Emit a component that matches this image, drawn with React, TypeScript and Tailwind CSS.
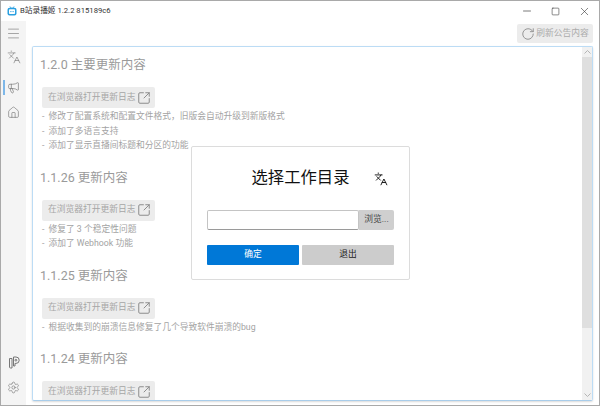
import React from 'react';
import { House, Languages, Megaphone, Menu, Minus, RotateCw, Settings, Square, SquareArrowOutUpRight, X } from 'lucide-react';

const sections = [
  {
    title: '1.2.0 主要更新内容',
    items: ['修改了配置系统和配置文件格式，旧版会自动升级到新版格式', '添加了多语言支持', '添加了显示直播间标题和分区的功能'],
  },
  {
    title: '1.1.26 更新内容',
    items: ['修复了 3 个稳定性问题', '添加了 Webhook 功能'],
  },
  {
    title: '1.1.25 更新内容',
    items: ['根据收集到的崩溃信息修复了几个导致软件崩溃的bug'],
  },
  {
    title: '1.1.24 更新内容',
    items: [],
  },
];

function AppIcon() {
  return (
    <svg width="10" height="10" viewBox="0 0 10 10" fill="none" className="shrink-0">
      <path d="M3 0.5l1.2 1.5M7 0.5L5.800 2" stroke="#2a9fe0" strokeWidth="0.9" />
      <rect x="0.500" y="1.800" width="9" height="7.700" rx="2" fill="#2a9fe0" />
      <rect x="2" y="3.300" width="6" height="4.700" rx="0.800" fill="#fff" />
      <circle cx="3.900" cy="5.600" r="0.700" fill="#2a9fe0" />
      <circle cx="6.100" cy="5.600" r="0.700" fill="#2a9fe0" />
    </svg>
  );
}

function PluginIcon() {
  return (
    <svg width="12" height="13" viewBox="0 0 12 13" fill="none" stroke="#777" strokeWidth="1">
      <path d="M1.500 2.500h2.500v9.500h-1.500a1 1 0 0 1-1-1z" />
      <path d="M5.500 1h2.500a3.200 3.200 0 0 1 0 6.400h-1v2.600h-1.500z" />
      <circle cx="7.900" cy="4.200" r="0.900" />
    </svg>
  );
}

function ChangelogButton() {
  return (
    <div className="flex h-[21px] w-[113px] shrink-0 items-center justify-between rounded-[2px] bg-[#ececec] pl-[6px] pr-[4px] text-[8.75px] text-[#a6a6a6]">
      <span className="whitespace-nowrap">在浏览器打开更新日志</span>
      <SquareArrowOutUpRight size={14} strokeWidth={1.7} className="text-[#8c8c8c]" />
    </div>
  );
}

export default function App() {
  return (
    <div
      className="relative flex h-[406px] w-[600px] flex-col overflow-hidden border border-[#a9a9a9] bg-white text-[#1a1a1a]"
      style={{ fontFamily: 'Roboto, "Noto Sans CJK SC", sans-serif' }}
    >
      {/* title bar */}
      <div className="flex h-[20px] shrink-0 items-center pl-[6px] text-[7.7px] text-[#333]">
        <AppIcon />
        <span className="ml-[3px] whitespace-nowrap">B站录播姬 1.2.2 815189c6</span>
        <div className="ml-auto flex items-center text-[#333]">
          <span className="flex w-[29px] justify-center"><Minus size={12} strokeWidth={1.3} /></span>
          <span className="flex w-[29px] justify-center"><Square size={9} strokeWidth={1.5} /></span>
          <span className="flex w-[29px] justify-center"><X size={13} strokeWidth={1.1} /></span>
        </div>
      </div>

      <div className="flex min-h-0 flex-1">
        {/* sidebar */}
        <div className="flex w-[25px] shrink-0 flex-col items-center bg-[#f4f4f4] pb-[11px] pt-[5px] text-[#777]">
          <Menu size={15} strokeWidth={1} />
          <Languages size={14} strokeWidth={1.1} className="mt-[9px]" />
          <div className="relative mt-[17px] flex w-full justify-center">
            <span className="absolute left-[2px] top-[-1px] h-[15px] w-[1.5px] bg-[#7db7e8]" />
            <Megaphone size={13} strokeWidth={1.3} />
          </div>
          <House size={13} strokeWidth={1.2} className="mt-[12px]" />
          <div className="mt-auto flex flex-col items-center gap-[12px]">
            <PluginIcon />
            <Settings size={13} strokeWidth={1.2} />
          </div>
        </div>

        {/* main */}
        <div className="flex min-w-0 flex-1 flex-col pb-[4px] pl-[6px] pr-[6px]">
          <div className="flex h-[25px] shrink-0 items-start justify-end pt-[3px]">
            <div className="flex h-[19px] w-[76px] items-center justify-center gap-[1px] rounded-[2px] bg-[#ececec] text-[8.75px] text-[#ababab]">
              <RotateCw size={14} strokeWidth={1.6} className="text-[#8f8f8f]" />
              <span className="whitespace-nowrap">刷新公告内容</span>
            </div>
          </div>

          <div className="flex min-h-0 flex-1 overflow-hidden rounded-[2px] border border-[#bcdcf5] border-b-[#a9cdea] shadow-[0_1px_2px_rgba(0,0,0,0.15)]">
            <div className="min-w-0 flex-1 overflow-hidden pl-[7px] pt-[9px]">
              {sections.map((section) => (
                <div key={section.title} className="mb-[16px]">
                  <div className="flex h-[18px] items-center whitespace-nowrap text-[12.5px] leading-[18px] text-[#9a9a9a]">{section.title}</div>
                  <div className="mt-[13px]">
                    <div className="ml-[2px]"><ChangelogButton /></div>
                    <div className="mt-[1px]">
                      {section.items.map((item) => (
                        <div key={item} className="flex h-[14.5px] items-center gap-[4px] whitespace-nowrap pl-[2px] text-[8.75px] leading-[14.5px] text-[#a3a3a3]">
                          <span>-</span>
                          <span>{item}</span>
                        </div>
                      ))}
                    </div>
                  </div>
                </div>
              ))}
            </div>
            {/* scrollbar */}
            <div className="relative flex w-[10px] shrink-0 flex-col bg-[#f1f1f1]">
              <div className="flex h-[10px] items-center justify-center">
                <svg width="7" height="4" viewBox="0 0 7 4" fill="none" stroke="#b5b5b5"><path d="M0.5 3.500l3-3 3 3" /></svg>
              </div>
              <div className="h-[271px] bg-[#dfdfdf]" />
              <div className="mt-auto flex h-[10px] items-center justify-center">
                <svg width="7" height="4" viewBox="0 0 7 4" fill="none" stroke="#b5b5b5"><path d="M0.5 0.500l3 3 3-3" /></svg>
              </div>
            </div>
          </div>
        </div>
      </div>

      {/* folder dialog */}
      <div className="absolute left-[190px] top-[145px] flex h-[134px] w-[219px] flex-col rounded-[2px] border border-[#dcdcdc] bg-white px-[15px]">
        <div className="relative mt-[12px] flex h-[38px] items-center justify-center text-[16.33px] text-[#111]">
          <span>选择工作目录</span>
          <Languages size={14} strokeWidth={1.6} className="absolute right-[6px] top-[13px] text-[#111]" />
        </div>
        <div className="mt-[13px] flex h-[20px]">
          <div className="min-w-0 flex-1 rounded-[2px] border border-[#c4c4c4] border-b-[#9a9a9a] bg-white" />
          <div className="flex w-[35px] items-center justify-center rounded-r-[2px] bg-[#cfcfcf] text-[8.75px] text-[#444]">浏览...</div>
        </div>
        <div className="mt-[15px] flex h-[20px] gap-[3px] text-[8.75px]">
          <div className="flex flex-1 items-center justify-center rounded-[1px] bg-[#0078d7] text-white">确定</div>
          <div className="flex flex-1 items-center justify-center rounded-[1px] bg-[#cccccc] text-[#222]">退出</div>
        </div>
      </div>
    </div>
  );
}
